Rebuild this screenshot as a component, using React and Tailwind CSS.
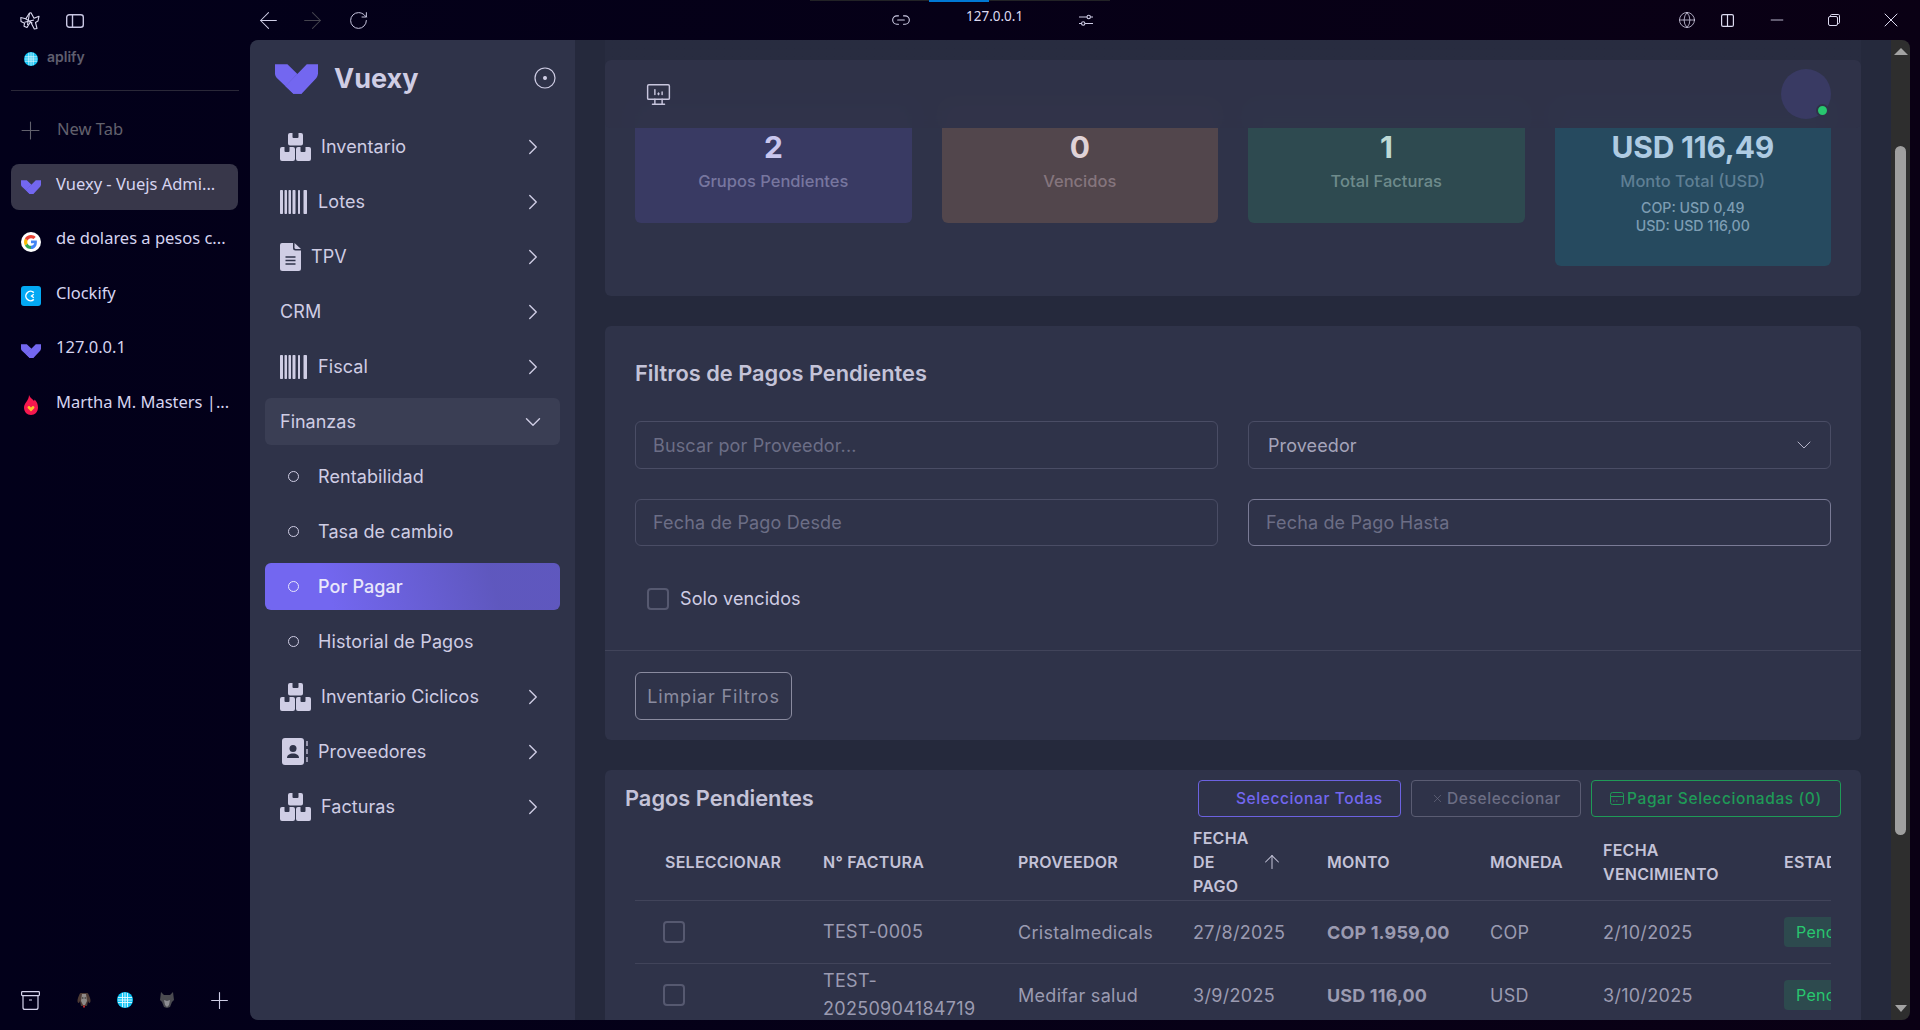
import React from "react";
import { ArrowLeft, ArrowRight, RotateCw, Link2, Globe, Plus, Minus, X, ChevronRight, ChevronDown, ArrowUp } from "lucide-react";
import { TbDeviceDesktopAnalytics } from "react-icons/tb";

const VuexyLogo = ({ className }) => (
  <svg className={className} viewBox="0 0 32 22" fill="none">
    <path fillRule="evenodd" clipRule="evenodd" d="M0.00172773 0V6.85398C0.00172773 6.85398 -0.133178 9.01207 1.98092 10.8388L13.6912 21.9964L19.7809 21.9181L18.8042 9.88248L16.4951 7.17289L9.23799 0H0.00172773Z" fill="#7367F0" />
    <path d="M7.77 16.36L16.5 7.17L18.8 9.88L13 16.5L10.5 19Z" fill="#161616" opacity="0.18" />
    <path fillRule="evenodd" clipRule="evenodd" d="M7.77295 16.3566L23.6563 0H32V6.88383C32 6.88383 31.8262 9.17836 30.6591 10.4057L19.7824 22H13.6938L7.77295 16.3566Z" fill="#7367F0" />
  </svg>
);

const GlobeDot = ({ className }) => (
  <svg className={className} viewBox="0 0 16 16">
    <circle cx="8" cy="8" r="8" fill="#12c4f5" />
    <path d="M1 5.5h14M1 8h14M1 10.500h14M5.500 1v14M8 .5v15M10.500 1v14" stroke="#e4f9ff" strokeWidth="0.9" fill="none" />
  </svg>
);

const GoogleIcon = ({ className }) => (
  <svg className={className} viewBox="0 0 20 20">
    <circle cx="10" cy="10" r="10" fill="#fff" />
    <path d="M15.800 8.400H10v2.900h3.300c-.4 1.500-1.700 2.500-3.300 2.500V17c3.800 0 6.400-3.100 5.800-8.600z" fill="#4285f4" />
    <path d="M10 13.800c-1.600 0-2.900-1-3.400-2.400l-2.700 2C5 15.600 7.300 17 10 17z" fill="#34a853" />
    <path d="M6.300 10c0-.5.100-1 .3-1.400l-2.700-2C3.300 7.600 3 8.800 3 10s.3 2.400.9 3.400l2.700-2c-.2-.4-.3-.9-.3-1.400z" fill="#fbbc05" />
    <path d="M10 6.200c1 0 1.800.3 2.500.9l2.200-2.200C13.400 3.700 11.800 3 10 3 7.300 3 5 4.400 3.900 6.600l2.700 2C7.100 7.200 8.400 6.200 10 6.200z" fill="#ea4335" />
  </svg>
);

const ClockifyIcon = ({ className }) => (
  <svg className={className} viewBox="0 0 20 20">
    <rect width="20" height="20" rx="3" fill="#03a9f4" />
    <path d="M12.800 6.600A4.700 4.700 0 1 0 12.800 13.400" stroke="#fff" strokeWidth="1.500" fill="none" />
    <path d="M12.800 8.300L10.500 10l2.300 1.700" stroke="#fff" strokeWidth="1.400" fill="none" />
  </svg>
);

const FireIcon = ({ className }) => (
  <svg className={className} viewBox="0 0 14 20">
    <path d="M5 0c1 3 4 4 5 6 .4-.6.600-1 .6-1.600C12.800 6.500 14 9 14 12.500 14 17 11 20 7 20s-7-3-7-7.500C0 8 5 5.500 5 0z" fill="#f5184f" />
    <path d="M7 16.500L3.800 13.200c-1-1.300.9-3 2.100-1.800L7 12.400l1.100-1c1.200-1.200 3.100.5 2.100 1.800z" fill="#fbc02d" />
  </svg>
);

const ArcLogo = ({ className }) => (
  <svg className={className} viewBox="0 0 20 18" fill="none" stroke="#dcdaf0" strokeWidth="1.100" strokeLinejoin="round">
    <path d="M9.500 1L11 .8l3 5.500 5-2-1 4.700-2.500 1.500 1.500 6-2.700.5-3.800-7.200-3.500 5.700-3-1.300.6-3L1 9.500.8 5.500l5 1.300z" />
    <path d="M5.800 6.800l6.600 4.500M4.500 10.200L14 8M9.500 1L7.500 13" />
  </svg>
);

const PanelIcon = () => (
  <svg className="w-[18px] h-[14px]" viewBox="0 0 18 14" fill="none" stroke="#c8c6e2" strokeWidth="1.400">
    <rect x=".7" y=".7" width="16.600" height="12.600" rx="2.500" />
    <path d="M6.500 .7v12.600" />
  </svg>
);

const Archive = () => (
  <svg className="w-[19px] h-[19px]" viewBox="0 0 19 19" fill="none" stroke="#d5d3ec" strokeWidth="1.200">
    <rect x=".6" y=".6" width="17.800" height="4" rx=".8" />
    <path d="M2 4.600v11.800a2 2 0 0 0 2 2h11a2 2 0 0 0 2-2V4.600M8 9h3" />
  </svg>
);

const DogIcon = () => (
  <svg className="w-[16px] h-[16px]" viewBox="0 0 16 16">
    <path d="M5 1h6c1.500 0 1.800 2 3 5 1 3 .5 5-1 5l-1-2-1 5H5L4 9l-1 2C1.500 11 1 9 2 6c1.200-3 1.500-5 3-5z" fill="#4d3a34" />
    <path d="M6 2h4l1 7-2 4H7L5 9z" fill="#8f8a88" />
    <circle cx="6.800" cy="6" r=".7" fill="#222" /><circle cx="9.200" cy="6" r=".7" fill="#222" />
    <rect x="7" y="13.500" width="2" height="2" fill="#b5282c" />
  </svg>
);

const WolfIcon = () => (
  <svg className="w-[14px] h-[16px]" viewBox="0 0 14 16">
    <path d="M1 0l3 3h6l3-3 1 8-2 2-2 5-3 1-3-1-2-5-2-2z" fill="#4a4a50" />
    <path d="M4 8l3 1 3-1-1 5-2 2-2-2z" fill="#8d8d92" />
  </svg>
);

const SlidersIcon = () => (
  <svg className="w-[16px] h-[16px]" viewBox="0 0 16 16" fill="none" stroke="#cfcde6" strokeWidth="1.100">
    <path d="M1 5h8M12.500 5H15M1 11.500h2.500M7 11.500h8" />
    <circle cx="10.700" cy="5" r="1.700" />
    <circle cx="5.200" cy="11.500" r="1.700" />
  </svg>
);

const SplitIcon = () => (
  <svg className="w-[13px] h-[13px]" viewBox="0 0 13 13" fill="none" stroke="#dcdaf0" strokeWidth="1.200">
    <rect x=".6" y=".6" width="11.800" height="11.800" rx="1.500" />
    <path d="M6.500 .6v11.800" />
  </svg>
);

const RestoreIcon = () => (
  <svg className="w-[12px] h-[12px]" viewBox="0 0 12 12" fill="none" stroke="#dcdaf0" strokeWidth="1">
    <rect x=".5" y="2.500" width="9" height="9" rx="1.500" />
    <path d="M2.500 2.500V1.700A1.200 1.200 0 0 1 3.700.5h6.600a1.200 1.200 0 0 1 1.200 1.200v6.600a1.200 1.200 0 0 1-1.200 1.200h-.8" />
  </svg>
);

const PackagesIcon = () => (
  <svg className="w-[31px] h-[28px] shrink-0" viewBox="0 0 31 28" fill="#cfcde4">
    <path d="M10 0h2.500v4a1 1 0 0 0 1 1h4a1 1 0 0 0 1-1V0H21a2 2 0 0 1 2 2v8.500a2 2 0 0 1-2 2H10a2 2 0 0 1-2-2V2a2 2 0 0 1 2-2z" />
    <path d="M2 14h2.500v4a1 1 0 0 0 1 1h3a1 1 0 0 0 1-1v-4H13a2 2 0 0 1 2 2v10a2 2 0 0 1-2 2H2a2 2 0 0 1-2-2V16a2 2 0 0 1 2-2z" />
    <path d="M18 14h2.500v4a1 1 0 0 0 1 1h3a1 1 0 0 0 1-1v-4H29a2 2 0 0 1 2 2v10a2 2 0 0 1-2 2H18a2 2 0 0 1-2-2V16a2 2 0 0 1 2-2z" />
  </svg>
);

const BarcodeIcon = () => (
  <svg className="w-[27px] h-[24px] shrink-0" viewBox="0 0 27 24" fill="#cfcde4">
    <rect x="0" width="3" height="24" rx=".7" />
    <rect x="4.500" width="2.500" height="24" rx=".7" />
    <rect x="8.500" width="2.500" height="24" rx=".7" />
    <rect x="12.500" width="3" height="24" rx=".7" />
    <rect x="18" width="2" height="24" rx=".7" />
    <rect x="23.500" width="3.500" height="24" rx=".7" />
  </svg>
);

const FileIcon = () => (
  <svg className="w-[21px] h-[28px] shrink-0" viewBox="0 0 21 28">
    <path d="M2 0h11v5a2.500 2.500 0 0 0 2.500 2.500H21V25.500a2.500 2.500 0 0 1-2.500 2.500h-16A2.500 2.500 0 0 1 0 25.500V2a2 2 0 0 1 2-2z" fill="#cfcde4" />
    <path d="M14.500 0L21 6h-5a1.500 1.500 0 0 1-1.500-1.500z" fill="#cfcde4" />
    <path d="M5.500 14h10M5.500 17.500h10M5.500 21h10" stroke="#2f3349" strokeWidth="1.600" />
  </svg>
);

const ContactIcon = () => (
  <svg className="w-[26px] h-[27px] shrink-0" viewBox="0 0 26 27">
    <rect x="0" width="22" height="27" rx="3" fill="#cfcde4" />
    <circle cx="11" cy="10.500" r="3.500" fill="#2f3349" />
    <path d="M5 20c0-3 2.500-4.500 6-4.500s6 1.500 6 4.500z" fill="#2f3349" />
    <path d="M25 3v5M25 11v5M25 19v5" stroke="#cfcde4" strokeWidth="1.300" />
  </svg>
);

const PayIcon = () => (
  <svg className="w-[14px] h-[13px] shrink-0" viewBox="0 0 14 13" fill="none" stroke="#1f9a57" strokeWidth="1">
    <rect x=".5" y=".5" width="13" height="12" rx="2" />
    <path d="M.5 4.500h13M3 9h1.500M6 9h1.500" />
  </svg>
);

const tabs = [
  { icon: <VuexyLogo className="w-5 h-[14px]" />, label: "Vuexy - Vuejs Admi...", active: true },
  { icon: <GoogleIcon className="w-5 h-5" />, label: "de dolares a pesos c..." },
  { icon: <ClockifyIcon className="w-5 h-5" />, label: "Clockify" },
  { icon: <VuexyLogo className="w-5 h-[14px]" />, label: "127.0.0.1" },
  { icon: <FireIcon className="w-[14px] h-5" />, label: "Martha M. Masters |..." },
];

function BrowserSide() {
  return (
    <aside className="w-[250px] shrink-0 flex flex-col font-['Noto_Sans',sans-serif]">
      <div className="h-[40px] flex items-center pl-[20px] gap-[26px] pt-[2px]">
        <ArcLogo className="w-[20px] h-[18px]" />
        <PanelIcon />
      </div>
      <div className="h-[35px] flex items-center pl-[24px] gap-[9px]">
        <GlobeDot className="w-[14px] h-[14px] mt-[3px]" />
        <span className="text-[14px] font-semibold text-[#5f5e6e] leading-none font-['Inter',sans-serif] -mt-[2px]">aplify</span>
      </div>
      <div className="h-px mx-[11px] mt-[15px] bg-[#2a2838]" />
      <div className="flex items-center h-[30px] mt-[24px] pl-[16px] gap-[12px] text-[#62616d]">
        <Plus size={29} strokeWidth={0.9} />
        <span className="text-[16.5px] -mt-[2px]">New Tab</span>
      </div>
      <div className="mt-[19px] flex flex-col gap-[8.5px]">
        {tabs.map((t) => (
          <div key={t.label} className={`ml-[11px] mr-[12px] h-[46px] rounded-[8px] flex items-center ${t.active ? "bg-[#38374a]" : ""}`}>
            <span className="w-[45px] pl-[10px] flex items-center justify-start shrink-0">
              <span className="w-5 flex justify-center">{t.icon}</span>
            </span>
            <span className="text-[16.5px] text-[#d6d4f0] whitespace-nowrap -mt-[6px]">{t.label}</span>
          </div>
        ))}
      </div>
      <div className="mt-auto h-[60px] flex items-center pl-[21px]">
        <Archive />
        <span className="ml-[36px]"><DogIcon /></span>
        <span className="ml-[25px]"><GlobeDot className="w-[16px] h-[16px]" /></span>
        <span className="ml-[27px]"><WolfIcon /></span>
        <span className="ml-[32px] text-[#cfcde6]"><Plus size={27} strokeWidth={1} /></span>
      </div>
    </aside>
  );
}

function TopBar() {
  return (
    <div className="h-[40px] shrink-0 relative flex items-center font-['Noto_Sans',sans-serif]">
      <div className="absolute top-0 left-[560px] w-[300px] h-px bg-[#222226]">
        <div className="absolute left-[119px] w-[60px] h-[2px] bg-[#0078d4]" />
      </div>
      <div className="flex items-center ml-[4.5px] text-[#cfcde6]">
        <ArrowLeft size={27} strokeWidth={0.9} />
        <span className="ml-[17px] text-[#45444f]"><ArrowRight size={27} strokeWidth={0.9} /></span>
        <span className="ml-[22px]"><RotateCw size={21} strokeWidth={1.1} /></span>
      </div>
      <span className="ml-[522.5px] text-[#cfcde6]"><Link2 size={20} strokeWidth={1.3} /></span>
      <span className="ml-[55px] -mt-[7px] text-[13.5px] text-[#dcdaf0] w-[58px]">127.0.0.1</span>
      <span className="ml-[54px]"><SlidersIcon /></span>
      <div className="ml-auto flex items-center text-[#dcdaf0] pr-[17px]">
        <Globe size={18} strokeWidth={1} />
        <span className="ml-[24.5px]"><SplitIcon /></span>
        <span className="ml-[33.5px]"><Minus size={20} strokeWidth={1} /></span>
        <span className="ml-[41px]"><RestoreIcon /></span>
        <span className="ml-[39px]"><X size={24} strokeWidth={1} /></span>
      </div>
    </div>
  );
}

const menuTop = [
  { label: "Inventario", icon: <PackagesIcon />, gap: "gap-[10px]" },
  { label: "Lotes", icon: <BarcodeIcon />, gap: "gap-[11px]" },
  { label: "TPV", icon: <FileIcon />, gap: "gap-[10px]" },
  { label: "CRM", icon: null, gap: "" },
  { label: "Fiscal", icon: <BarcodeIcon />, gap: "gap-[11px]" },
];
const menuBottom = [
  { label: "Inventario Ciclicos", icon: <PackagesIcon />, gap: "gap-[10px]" },
  { label: "Proveedores", icon: <span className="pl-[2px] flex"><ContactIcon /></span>, gap: "gap-[10px]" },
  { label: "Facturas", icon: <PackagesIcon />, gap: "gap-[10px]" },
];
const subs = ["Rentabilidad", "Tasa de cambio", "Por Pagar", "Historial de Pagos"];

function MenuItem({ item }) {
  return (
    <div className={`h-[47px] mx-[15px] pl-[15px] pr-[14px] flex items-center ${item.gap} text-[#cfcde4]`}>
      {item.icon}
      <span className="text-[18px] tracking-[0.08px] flex-1 whitespace-nowrap">{item.label}</span>
      <ChevronRight size={26} strokeWidth={1.3} />
    </div>
  );
}

function Sidebar() {
  return (
    <nav className="w-[325px] shrink-0 bg-[#2f3349] flex flex-col gap-[8px] rounded-l-[8px]">
      <div className="h-[75px] flex items-center pl-[25px] pr-[19px]">
        <VuexyLogo className="w-[43px] h-[30px] mt-[3px]" />
        <span className="ml-[16px] text-[27px] font-bold text-[#cfcde4] flex-1 mt-[4px]">Vuexy</span>
        <svg className="w-[22px] h-[22px] mt-[1px]" viewBox="0 0 22 22" fill="none" stroke="#cfcde4" strokeWidth="1.200">
          <circle cx="11" cy="11" r="10" />
          <circle cx="11" cy="11" r="1.400" fill="#cfcde4" />
        </svg>
      </div>
      {menuTop.map((m) => <MenuItem key={m.label} item={m} />)}
      <div className="h-[47px] mx-[15px] pl-[15px] pr-[14px] flex items-center rounded-[6px] bg-[#3a3e54] text-[#cfcde4]">
        <span className="text-[18px] flex-1">Finanzas</span>
        <ChevronDown size={26} strokeWidth={1.3} />
      </div>
      {subs.map((s) => {
        const active = s === "Por Pagar";
        return (
          <div key={s} className={`h-[47px] mx-[15px] pl-[23px] flex items-center gap-[19px] rounded-[6px] ${active ? "bg-[linear-gradient(72.47deg,#7367f0_22.16%,rgba(115,103,240,.7)_76.47%)] text-[#e9e7fb] font-medium" : "text-[#cfcde4]"}`}>
            <span className={`w-[11px] h-[11px] rounded-full border-[1.5px] ${active ? "border-[#e9e7fb]" : "border-[#cfcde4]"}`} />
            <span className="text-[18px] tracking-[0.08px]">{s}</span>
          </div>
        );
      })}
      {menuBottom.map((m) => <MenuItem key={m.label} item={m} />)}
    </nav>
  );
}

function Stat({ value, label, bg, color, labelColor, extra }) {
  return (
    <div className={`rounded-[6px] ${bg} pt-[30px] pb-[31px] flex flex-col items-center`}>
      <div className={`text-[30px] leading-[38px] font-bold tracking-[-0.2px] ${color}`}>{value}</div>
      <div className={`text-[16.5px] leading-[22px] mt-[4px] font-medium ${labelColor}`}>{label}</div>
      {extra && (
        <div className={`mt-[7px] text-[14.2px] leading-[18px] font-medium text-center ${extra}`}>
          <div>COP: USD 0,49</div>
          <div>USD: USD 116,00</div>
        </div>
      )}
    </div>
  );
}

function Stats() {
  return (
    <section className="-mt-[20px] bg-[#2f3349] rounded-[6px] pt-[78px] pb-[30px] px-[30px]">
      <div className="grid grid-cols-4 gap-[30px] items-start">
        <Stat value="2" label="Grupos Pendientes" bg="bg-[#393a63]" color="text-[#c9c6ee]" labelColor="text-[#77769f]" />
        <Stat value="0" label="Vencidos" bg="bg-[#52464c]" color="text-[#e0d3d7]" labelColor="text-[#85757d]" />
        <Stat value="1" label="Total Facturas" bg="bg-[#2e4a50]" color="text-[#bed9d5]" labelColor="text-[#6e8b8c]" />
        <Stat value="USD 116,49" label="Monto Total (USD)" bg="bg-[#264a5f]" color="text-[#aecbe2]" labelColor="text-[#5f7f94]" extra="text-[#7d9db3]" />
      </div>
    </section>
  );
}

function Field({ placeholder, strong, h = "h-[48px]" }) {
  return (
    <input
      readOnly
      placeholder={placeholder}
      className={`${h} w-full rounded-[6px] border ${strong ? "border-[#7a7b96]" : "border-[#4a4d65]"} px-[17px] bg-transparent text-[18px] tracking-[0.15px] placeholder:text-[#6c6e86] outline-none`}
    />
  );
}

function Filters() {
  return (
    <section className="mt-[30px] bg-[#2f3349] rounded-[6px]">
      <div className="px-[30px] pt-[32px] pb-[38px] border-b border-[#41445a]">
        <h2 className="text-[21.8px] leading-[30px] font-semibold text-[#c4c3d8]">Filtros de Pagos Pendientes</h2>
        <div className="grid grid-cols-2 gap-x-[30px] gap-y-[30px] mt-[33px]">
          <Field placeholder="Buscar por Proveedor..." />
          <div className="h-[48px] rounded-[6px] border border-[#4a4d65] pl-[19px] pr-[14px] flex items-center justify-between text-[18px] tracking-[0.1px] text-[#a5a4ba]">
            <span>Proveedor</span>
            <ChevronDown size={24} strokeWidth={1} className="text-[#b4b3c8]" />
          </div>
          <Field placeholder="Fecha de Pago Desde" h="h-[47px]" />
          <Field placeholder="Fecha de Pago Hasta" h="h-[47px]" strong />
        </div>
        <div className="mt-[39px] ml-[12px] flex items-center gap-[11px]">
          <span className="w-[22px] h-[22px] rounded-[4px] border-2 border-[#565970]" />
          <span className="text-[18px] tracking-[0.1px] text-[#cfcde4]">Solo vencidos</span>
        </div>
      </div>
      <div className="px-[30px] pt-[21px] pb-[20px]">
        <button className="h-[48px] w-[157px] rounded-[6px] border border-[#8a8b9f] text-[#8a8b9f] text-[18px] font-normal tracking-[0.85px]">Limpiar Filtros</button>
      </div>
    </section>
  );
}

const headers = [
  { label: "SELECCIONAR", w: "w-[164px]", extra: "pl-[30px]" },
  { label: "N° FACTURA", w: "w-[195px]", extra: "pl-[24px]" },
  { label: "PROVEEDOR", w: "w-[175px]", extra: "pl-[24px]" },
  { label: "FECHA DE PAGO", w: "w-[134px]", extra: "pl-[24px]", sort: true },
  { label: "MONTO", w: "w-[163px]", extra: "pl-[24px]" },
  { label: "MONEDA", w: "w-[113px]", extra: "pl-[24px]" },
  { label: "FECHA VENCIMIENTO", w: "w-[181px]", extra: "pl-[24px]" },
  { label: "ESTADO", w: "w-[160px]", extra: "pl-[24px]" },
];

const rows = [
  { f: "TEST-0005", p: "Cristalmedicals", d: "27/8/2025", m: "COP 1.959,00", c: "COP", v: "2/10/2025" },
  { f: "TEST-20250904184719", p: "Medifar salud", d: "3/9/2025", m: "USD 116,00", c: "USD", v: "3/10/2025" },
];

function Pending() {
  return (
    <section className="mt-[30px] bg-[#2f3349] rounded-t-[6px]">
      <div className="flex items-center pl-[20px] pr-[20px] pt-[10px] h-[47px]">
        <h2 className="text-[21.8px] font-semibold text-[#c4c3d8] flex-1">Pagos Pendientes</h2>
        <div className="flex gap-[10px] text-[15.5px] font-medium tracking-[0.6px]">
          <button className="w-[203px] h-[37px] rounded-[4px] border border-[#6c62e0] text-[#7367f0] pl-[37px] text-left">Seleccionar Todas</button>
          <button className="w-[170px] h-[37px] rounded-[4px] border border-[#5a5c72] text-[#6c6e84] pl-[19px] flex items-center gap-[3px]">
            <X size={13} strokeWidth={1.2} />
            <span>Deseleccionar</span>
          </button>
          <button className="w-[250px] h-[37px] rounded-[4px] border border-[#1f9a57] text-[#1f9a57] pl-[18px] flex items-center gap-[3px]">
            <PayIcon />
            <span>Pagar Seleccionadas (0)</span>
          </button>
        </div>
      </div>
      <div className="mx-[30px] mt-[8px] overflow-hidden">
        <table className="table-fixed w-[1285px] border-collapse">
          <thead>
            <tr className="h-[75px] border-b border-[#41445a]">
              {headers.map((h) => (
                <th key={h.label} className={`${h.w} ${h.extra} text-left align-middle font-semibold text-[16px] leading-[24px] tracking-[0.25px] text-[#c4c3d8] uppercase`}>
                  {h.sort ? (
                    <div className="flex items-center pr-[20px]">
                      <span className="flex-1 pr-[8px]">{h.label}</span>
                      <ArrowUp size={22} strokeWidth={1.1} className="shrink-0" />
                    </div>
                  ) : h.label}
                </th>
              ))}
            </tr>
          </thead>
          <tbody className="text-[18px] tracking-[0.3px] text-[#9b9bb1]">
            {rows.map((r) => (
              <tr key={r.f} className="h-[63px] border-b border-[#41445a]">
                <td className="pl-[28px] pt-[1px]"><span className="block w-[22px] h-[22px] rounded-[4px] border-2 border-[#565970]" /></td>
                <td className="pl-[24px] pt-[1px] leading-[28px] break-words">{r.f === "TEST-0005" ? r.f : <>TEST-<br />20250904184719</>}</td>
                <td className="pl-[24px] pt-[1px]">{r.p}</td>
                <td className="pl-[24px] pt-[1px]">{r.d}</td>
                <td className="pl-[24px] pt-[1px] font-bold tracking-[0.15px] whitespace-nowrap">{r.m}</td>
                <td className="pl-[24px] pt-[1px]">{r.c}</td>
                <td className="pl-[24px] pt-[1px]">{r.v}</td>
                <td className="pl-[24px] pt-[1px]">
                  <span className="inline-block h-[30px] leading-[30px] px-[12px] rounded-[4px] bg-[#2d4a4e] text-[16px] text-[#28c76f]">Pendiente</span>
                </td>
              </tr>
            ))}
          </tbody>
        </table>
      </div>
    </section>
  );
}

function Main() {
  return (
    <main className="relative flex-1 min-w-0 bg-[#25293c] overflow-hidden">
      <div className="px-[30px]">
        <Stats />
        <Filters />
        <Pending />
      </div>
      <div className="absolute left-0 right-0 top-0 h-[70px] bg-[linear-gradient(180deg,rgba(37,41,60,.7)_44%,rgba(37,41,60,.43)_73%,rgba(37,41,60,0))]" />
      <div className="absolute left-[30px] right-[30px] top-[20px] h-[68px] rounded-[6px] bg-[#2f3349]/95 backdrop-blur-sm flex items-center pl-[39px] pr-[30px]">
        <TbDeviceDesktopAnalytics size={29} strokeWidth={1.2} className="text-[#c8c6de]" />
        <div className="ml-auto relative w-[50px] h-[50px] rounded-full bg-[#393a63]">
          <span className="absolute right-[2px] bottom-[2px] w-[13px] h-[13px] rounded-full bg-[#28c76f] border-[2px] border-[#2f3349]" />
        </div>
      </div>
    </main>
  );
}

function Scrollbar() {
  return (
    <div className="w-[19px] shrink-0 bg-[#2e2e2e] rounded-r-[8px] flex flex-col items-center">
      <span className="mt-[8px] w-0 h-0 border-x-[7px] border-x-transparent border-b-[7px] border-b-[#a3a3a3]" />
      <span className="mt-[91px] w-[11px] h-[689px] rounded-full bg-[#9f9f9f]" />
      <span className="mt-auto mb-[8px] w-0 h-0 border-x-[6px] border-x-transparent border-t-[7px] border-t-[#a3a3a3]" />
    </div>
  );
}

export default function App() {
  return (
    <div className="w-screen h-screen overflow-hidden flex bg-[linear-gradient(90deg,#02001a,#0a0014)] font-['Inter',sans-serif]">
      <BrowserSide />
      <div className="flex-1 min-w-0 flex flex-col">
        <TopBar />
        <div className="flex-1 min-h-0 flex mb-[10px] mr-[10px]">
          <Sidebar />
          <Main />
          <Scrollbar />
        </div>
      </div>
    </div>
  );
}
